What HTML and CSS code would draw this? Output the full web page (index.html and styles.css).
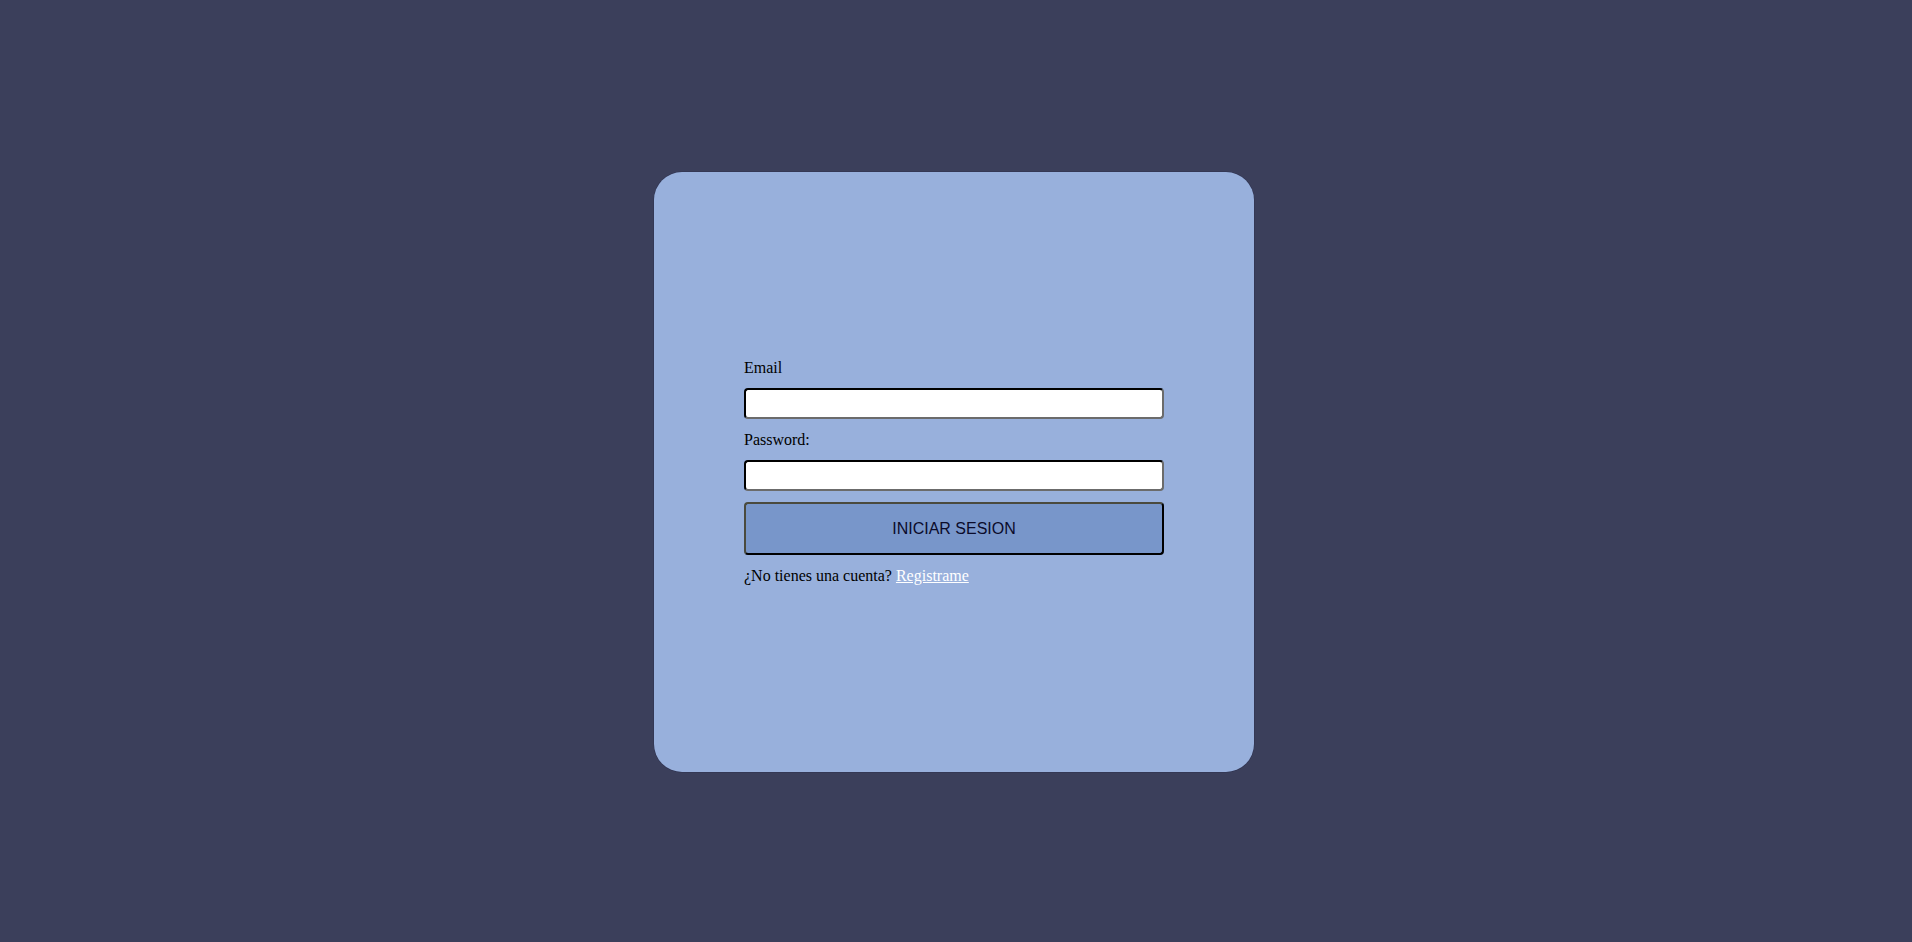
FILE: index.html
```html
<!DOCTYPE html>
<html lang="es">
<head>
<meta charset="utf-8">
<title>Iniciar sesión</title>
<link rel="stylesheet" href="styles.css">
</head>
<body>
<main class="page">
  <section class="card">
    <form class="login-form">
      <label class="field-label" for="email">Email</label>
      <input class="field-input" id="email" type="email">
      <label class="field-label" for="password">Password:</label>
      <input class="field-input" id="password" type="password">
      <button class="submit-btn" type="button">INICIAR SESION</button>
      <p class="register-text">¿No tienes una cuenta? <a class="register-link" href="#">Registrame</a></p>
    </form>
  </section>
</main>
</body>
</html>
```
FILE: styles.css
```css
html, body {
  margin: 0;
  padding: 0;
  height: 100%;
}

body {
  background: #3b3f5b;
  font-family: "Liberation Serif", "Times New Roman", serif;
  font-size: 16px;
  color: #000;
}

.page {
  height: 100%;
  display: flex;
  align-items: center;
  justify-content: center;
  padding: 1px 4px 0 0;
  box-sizing: border-box;
}

.card {
  width: 600px;
  height: 600px;
  background: #98b0dc;
  border-radius: 28px;
  display: flex;
  align-items: center;
  justify-content: center;
  box-shadow: 0 0 0 0.5px #2e3250;
}

.login-form {
  width: 420px;
  display: flex;
  flex-direction: column;
  gap: 11px;
}

.field-label {
  display: block;
  line-height: 19px;
}

.field-input {
  box-sizing: border-box;
  width: 100%;
  height: 31px;
  margin: 0;
  border: 2px inset #767676;
  border-color: #000 #6b6b6b #6b6b6b #000;
  border-radius: 4px;
  background: #fff;
  font-size: 16px;
  padding: 2px 6px;
}

.submit-btn {
  box-sizing: border-box;
  width: 100%;
  height: 53px;
  margin: 0;
  background: #7896ca;
  border: 2px solid #000;
  border-color: #4a4a3e #000 #000 #4a4a3e;
  border-radius: 4px;
  font-family: "Liberation Sans", Arial, sans-serif;
  font-size: 16px;
  color: #0b0b2a;
  cursor: pointer;
}

.register-text {
  margin: 0;
  line-height: 19px;
}

.register-link {
  color: #fff;
  text-decoration: underline;
}
```
